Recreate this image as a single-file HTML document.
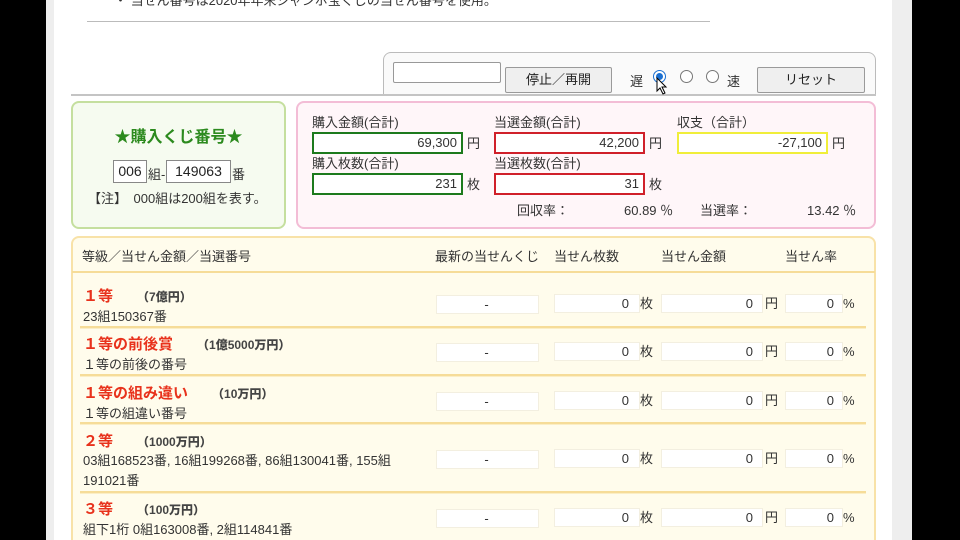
<!DOCTYPE html><html><head><meta charset="utf-8"><style>
*{margin:0;padding:0;box-sizing:border-box}
html,body{width:960px;height:540px;overflow:hidden}
body{background:#000;position:relative;font-family:"Liberation Sans","Noto Sans CJK JP",sans-serif;color:#333;font-size:13px}
.a{position:absolute}
.inp{position:absolute;background:#fff;text-align:right;padding-right:4px;font-size:13px;line-height:18px}
.btn{position:absolute;background:#efefef;border:1px solid #9a9a9a;border-radius:2px;text-align:center;font-size:13px;line-height:23px;color:#222}
.rad{position:absolute;width:13px;height:13px;border:1px solid #777;border-radius:50%;background:#fff}
.rt{position:absolute;left:83px;font-weight:bold;color:#e8321c;font-size:15px}
.rt b{color:#444;font-size:12px;margin-left:24px}
.rs{position:absolute;left:83px;font-size:13px;color:#333}
.c{position:absolute;background:#fff;border:1px solid #f3efe0;height:19px;line-height:17px;font-size:13px;text-align:right;padding-right:2px}
.u{position:absolute;font-size:13px;line-height:17px}
.sep{position:absolute;left:80px;width:786px;height:3px;background:#f6dc98;border-bottom:1px solid #fbeec5}
</style></head><body>
<div class="a" style="left:46px;top:0;width:866px;height:540px;background:#eeeeee"></div>
<div class="a" style="left:54px;top:0;width:838px;height:540px;background:#fff"></div>
<div class="a" style="left:114px;top:-10px;font-size:13px;color:#333">・ 当せん番号は2020年年末ジャンボ宝くじの当せん番号を使用。</div>
<div class="a" style="left:87px;top:21px;width:623px;height:1px;background:#bbb"></div>
<div class="a" style="left:383px;top:52px;width:493px;height:44px;border:1px solid #bbb;border-bottom:none;border-radius:8px 8px 0 0;background:#fafafa"></div>
<div class="a" style="left:71px;top:94px;width:805px;height:2px;background:#c4c4c4"></div>
<div class="a" style="left:393px;top:62px;width:108px;height:21px;border:1px solid #999;border-radius:2px;background:#fff"></div>
<div class="btn" style="left:505px;top:67px;width:107px;height:26px">停止／再開</div>
<div class="a" style="left:630px;top:71px;font-size:13px">遅</div>
<div class="rad" style="left:653px;top:70px;border-color:#1a6fd0"><div class="a" style="left:2px;top:2px;width:7px;height:7px;border-radius:50%;background:#1a6fd0"></div></div>
<div class="rad" style="left:680px;top:70px"></div>
<div class="rad" style="left:706px;top:70px"></div>
<div class="a" style="left:727px;top:71px;font-size:13px">速</div>
<div class="btn" style="left:757px;top:67px;width:108px;height:26px">リセット</div>
<svg class="a" style="left:656px;top:77px" width="12" height="18"><path d="M1 1 L1 14 L4 11 L7 17 L9 16 L6 10 L10 10 Z" fill="#fff" stroke="#000" stroke-width="1"/></svg>

<div class="a" style="left:71px;top:101px;width:215px;height:128px;border:2px solid #c5df9f;border-radius:8px;background:#f6fbf0"></div>
<div class="a" style="left:71px;top:123px;width:215px;text-align:center;font-size:16px;font-weight:bold;color:#2c8a1e">★購入くじ番号★</div>
<div class="a" style="left:113px;top:160px;width:34px;height:23px;border:1px solid #888;background:#fff;font-size:14px;line-height:21px;text-align:center;color:#222">006</div>
<div class="a" style="left:148px;top:164px">組-</div>
<div class="a" style="left:166px;top:160px;width:65px;height:23px;border:1px solid #888;background:#fff;font-size:14px;line-height:21px;text-align:center;color:#222">149063</div>
<div class="a" style="left:232px;top:164px">番</div>
<div class="a" style="left:88px;top:188px">【注】　000組は200組を表す。</div>

<div class="a" style="left:296px;top:101px;width:580px;height:128px;border:2px solid #f3bdd6;border-radius:8px;background:#fff6f9"></div>
<div class="a" style="left:312px;top:112px">購入金額(合計)</div>
<div class="a" style="left:494px;top:112px">当選金額(合計)</div>
<div class="a" style="left:677px;top:112px">収支（合計）</div>
<div class="inp" style="left:312px;top:132px;width:151px;height:22px;border:2px solid #1d7a1d">69,300</div><div class="u" style="left:467px;top:135px">円</div>
<div class="inp" style="left:494px;top:132px;width:151px;height:22px;border:2px solid #d0202a">42,200</div><div class="u" style="left:649px;top:135px">円</div>
<div class="inp" style="left:677px;top:132px;width:151px;height:22px;border:2px solid #f0ee3a">-27,100</div><div class="u" style="left:832px;top:135px">円</div>
<div class="a" style="left:312px;top:153px">購入枚数(合計)</div>
<div class="a" style="left:494px;top:153px">当選枚数(合計)</div>
<div class="inp" style="left:312px;top:173px;width:151px;height:22px;border:2px solid #1d7a1d">231</div><div class="u" style="left:467px;top:176px">枚</div>
<div class="inp" style="left:494px;top:173px;width:151px;height:22px;border:2px solid #d0202a">31</div><div class="u" style="left:649px;top:176px">枚</div>
<div class="a" style="left:517px;top:200px">回収率：</div>
<div class="a" style="left:624px;top:200px">60.89 ％</div>
<div class="a" style="left:700px;top:200px">当選率：</div>
<div class="a" style="left:807px;top:200px">13.42 ％</div>

<div class="a" style="left:71px;top:236px;width:805px;height:320px;border:2px solid #f8e2a8;border-radius:8px 8px 0 0;background:#fffcec"></div>
<div class="a" style="left:72px;top:271px;width:803px;height:2px;background:#f6dc98"></div>
<div class="a" style="left:82px;top:246px">等級／当せん金額／当選番号</div>
<div class="a" style="left:435px;top:246px">最新の当せんくじ</div>
<div class="a" style="left:554px;top:246px">当せん枚数</div>
<div class="a" style="left:661px;top:246px">当せん金額</div>
<div class="a" style="left:785px;top:246px">当せん率</div>

<div class="rt" style="top:285px">１等<b>（7億円）</b></div><div class="rs" style="top:306px">23組150367番</div>
<div class="sep" style="top:326px"></div>
<div class="rt" style="top:333px">１等の前後賞<b>（1億5000万円）</b></div><div class="rs" style="top:354px">１等の前後の番号</div>
<div class="sep" style="top:374px"></div>
<div class="rt" style="top:382px">１等の組み違い<b>（10万円）</b></div><div class="rs" style="top:403px">１等の組違い番号</div>
<div class="sep" style="top:422px"></div>
<div class="rt" style="top:430px">２等<b>（1000万円）</b></div><div class="rs" style="top:451px;line-height:20px">03組168523番, 16組199268番, 86組130041番, 155組<br>191021番</div>
<div class="sep" style="top:491px"></div>
<div class="rt" style="top:498px">３等<b>（100万円）</b></div><div class="rs" style="top:519px">組下1桁 0組163008番, 2組114841番</div>

<div class="c" style="left:436px;top:295px;width:103px;text-align:center">-</div><div class="c" style="left:554px;top:294px;width:86px;padding-right:10px">0</div><div class="u" style="left:640px;top:295px">枚</div><div class="c" style="left:661px;top:294px;width:102px;padding-right:9px">0</div><div class="u" style="left:765px;top:295px">円</div><div class="c" style="left:785px;top:294px;width:58px;padding-right:8px">0</div><div class="u" style="left:843px;top:295px">%</div>
<div class="c" style="left:436px;top:343px;width:103px;text-align:center">-</div><div class="c" style="left:554px;top:342px;width:86px;padding-right:10px">0</div><div class="u" style="left:640px;top:343px">枚</div><div class="c" style="left:661px;top:342px;width:102px;padding-right:9px">0</div><div class="u" style="left:765px;top:343px">円</div><div class="c" style="left:785px;top:342px;width:58px;padding-right:8px">0</div><div class="u" style="left:843px;top:343px">%</div>
<div class="c" style="left:436px;top:392px;width:103px;text-align:center">-</div><div class="c" style="left:554px;top:391px;width:86px;padding-right:10px">0</div><div class="u" style="left:640px;top:392px">枚</div><div class="c" style="left:661px;top:391px;width:102px;padding-right:9px">0</div><div class="u" style="left:765px;top:392px">円</div><div class="c" style="left:785px;top:391px;width:58px;padding-right:8px">0</div><div class="u" style="left:843px;top:392px">%</div>
<div class="c" style="left:436px;top:450px;width:103px;text-align:center">-</div><div class="c" style="left:554px;top:449px;width:86px;padding-right:10px">0</div><div class="u" style="left:640px;top:450px">枚</div><div class="c" style="left:661px;top:449px;width:102px;padding-right:9px">0</div><div class="u" style="left:765px;top:450px">円</div><div class="c" style="left:785px;top:449px;width:58px;padding-right:8px">0</div><div class="u" style="left:843px;top:450px">%</div>
<div class="c" style="left:436px;top:509px;width:103px;text-align:center">-</div><div class="c" style="left:554px;top:508px;width:86px;padding-right:10px">0</div><div class="u" style="left:640px;top:509px">枚</div><div class="c" style="left:661px;top:508px;width:102px;padding-right:9px">0</div><div class="u" style="left:765px;top:509px">円</div><div class="c" style="left:785px;top:508px;width:58px;padding-right:8px">0</div><div class="u" style="left:843px;top:509px">%</div>
</body></html>
